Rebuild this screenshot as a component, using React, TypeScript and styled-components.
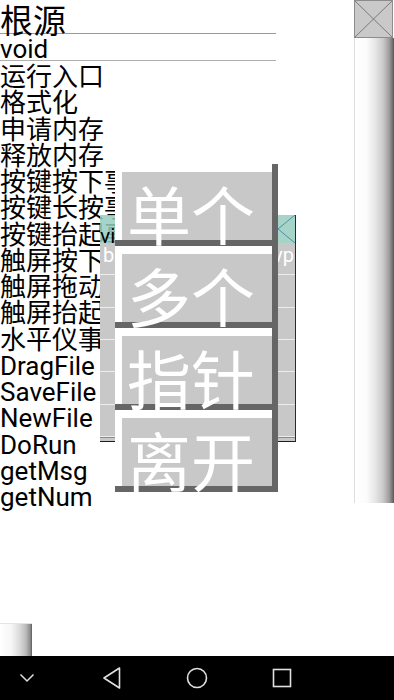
import React from "react";
import styled, { createGlobalStyle } from "styled-components";

const Global = createGlobalStyle`
  html, body { margin: 0; padding: 0; background: #fff; }
  body { font-family: Roboto, "Noto Sans CJK SC", sans-serif; }
`;

const Screen = styled.div`
  position: relative;
  width: 394px;
  height: 700px;
  overflow: hidden;
  display: flex;
  flex-direction: column;
  background: #fff;
`;

const Content = styled.div`
  flex: 1;
  display: flex;
  min-height: 0;
`;

const LeftPane = styled.div`
  flex: 1;
  display: flex;
  flex-direction: column;
  min-width: 0;
`;

const Header = styled.div`
  width: 276px;
  height: 33px;
  border-bottom: 1px solid #9a9a9a;
  font-size: 33px;
  line-height: 43px;
  color: #000;
  white-space: nowrap;
`;

const VoidRow = styled.div`
  width: 276px;
  height: 26px;
  border-bottom: 1px solid #b0b0b0;
  font-size: 26px;
  line-height: 30px;
  color: #000;
`;

const List = styled.div`
  padding-top: 3px;
  display: flex;
  flex-direction: column;
`;

const Item = styled.div`
  height: 26.25px;
  line-height: 26.25px;
  font-size: 26px;
  color: #000;
  white-space: nowrap;
`;

const Knob = styled.div`
  margin-top: auto;
  width: 32px;
  height: 33px;
  box-sizing: border-box;
  border-top: 1px solid #e4e4e4;
  background: linear-gradient(to right, #fff 0%, #f6f6f6 35%, #dcdcdc 60%, #bdbdbd 80%, #8e8e8e 94%, #5c5c5c 100%);
`;

const RightPane = styled.div`
  width: 40px;
  display: flex;
  flex-direction: column;
`;

const ThumbBox = styled.div`
  width: 39px;
  height: 38px;
  box-sizing: border-box;
  border: 1px solid #8c8c8c;
  background: #c9c9c9;
  svg { display: block; }
`;

const Track = styled.div`
  width: 40px;
  height: 465px;
  box-sizing: border-box;
  border-left: 1px solid #dedede;
  background: linear-gradient(to right, #fff 0%, #fbfbfb 30%, #e6e6e6 52%, #cacaca 72%, #9c9c9c 88%, #5a5a5a 100%);
`;

const Dialog = styled.div`
  position: absolute;
  left: 100px;
  top: 215px;
  width: 196px;
  display: flex;
  flex-direction: column;
  box-sizing: border-box;
  border-right: 1px solid #2a2a2a;
`;

const TitleBar = styled.div`
  position: relative;
  height: 28px;
  background: rgba(150, 205, 190, 0.85);
  font-size: 21px;
  line-height: 42px;
  color: #000;
  padding-left: 0;
  overflow: hidden;
  white-space: nowrap;
`;

const CloseIcon = styled.svg`
  position: absolute;
  right: 0;
  top: 0;
`;

const DRow = styled.div`
  height: 32.33px;
  box-sizing: border-box;
  background: #c8c8c8;
  border-bottom: 1px solid #ededed;
  display: flex;
  justify-content: space-between;
  padding: 0 1px 0 3px;
  font-size: 20px;
  line-height: 24px;
  color: #fff;
`;

const DBottom = styled.div`
  height: 5px;
  background: #c8c8c8;
  border-top: 1px solid #8a8a8a;
  border-bottom: 1px solid #1e1e1e;
  box-sizing: border-box;
`;

const Menu = styled.div`
  position: absolute;
  left: 115px;
  top: 164px;
  width: 163px;
  display: flex;
  flex-direction: column;
`;

const MenuShell = styled.div`
  height: 82px;
  box-sizing: border-box;
  border-right: 6px solid #666;
  border-bottom: 6px solid #666;
  display: flex;
`;

const MenuFace = styled.div`
  flex: 1;
  box-sizing: border-box;
  border-top: 8px solid #fff;
  border-left: 7px solid #fff;
  background: #c8c8c8;
  color: #fff;
  font-family: "Noto Sans CJK SC", sans-serif;
  font-size: 64px;
  line-height: 64px;
  padding: 8px 0 0 5px;
  white-space: nowrap;
`;

const NavBar = styled.div`
  height: 44px;
  background: #000;
  display: flex;
  align-items: center;
  gap: 45px;
  padding-left: 7px;
`;

const NavItem = styled.div`
  width: 40px;
  display: flex;
  justify-content: center;
  align-items: center;
  svg { display: block; }
`;

const items = [
  "运行入口",
  "格式化",
  "申请内存",
  "释放内存",
  "按键按下事件",
  "按键长按事件",
  "按键抬起事件",
  "触屏按下事件",
  "触屏拖动事件",
  "触屏抬起事件",
  "水平仪事件",
  "DragFile",
  "SaveFile",
  "NewFile",
  "DoRun",
  "getMsg",
  "getNum",
];

const menu = ["单个", "多个", "指针", "离开"];

export default function App() {
  return (
    <>
      <Global />
      <Screen>
        <Content>
          <LeftPane>
            <Header>根源</Header>
            <VoidRow>void</VoidRow>
            <List>
              {items.map((t) => (
                <Item key={t}>{t}</Item>
              ))}
            </List>
            <Knob />
          </LeftPane>
          <RightPane>
            <ThumbBox>
              <svg width="37" height="36" viewBox="0 0 37 36">
                <line x1="0" y1="0" x2="37" y2="36" stroke="#7a7a7a" strokeWidth="1" />
                <line x1="37" y1="0" x2="0" y2="36" stroke="#7a7a7a" strokeWidth="1" />
              </svg>
            </ThumbBox>
            <Track />
          </RightPane>
        </Content>
        <NavBar>
          <NavItem>
            <svg width="16" height="10" viewBox="0 0 16 10">
              <polyline points="1.5,1.5 8,8 14.5,1.5" fill="none" stroke="#e0e0e0" strokeWidth="1.5" />
            </svg>
          </NavItem>
          <NavItem>
            <svg width="20" height="24" viewBox="0 0 20 24">
              <polygon points="17.5,2 2,12 17.5,22" fill="none" stroke="#e0e0e0" strokeWidth="1.6" strokeLinejoin="round" />
            </svg>
          </NavItem>
          <NavItem>
            <svg width="24" height="24" viewBox="0 0 24 24">
              <circle cx="12" cy="12" r="9.5" fill="none" stroke="#e0e0e0" strokeWidth="1.6" />
            </svg>
          </NavItem>
          <NavItem>
            <svg width="22" height="22" viewBox="0 0 22 22">
              <rect x="2.5" y="2.5" width="17" height="17" fill="none" stroke="#e0e0e0" strokeWidth="1.6" />
            </svg>
          </NavItem>
        </NavBar>

        <Dialog>
          <TitleBar>
            vi
            <CloseIcon width="34" height="28" viewBox="0 0 34 28">
              <line x1="0" y1="0" x2="34" y2="28" stroke="#4f8fa8" strokeWidth="1" />
              <line x1="34" y1="0" x2="0" y2="28" stroke="#4f8fa8" strokeWidth="1" />
            </CloseIcon>
          </TitleBar>
          <DRow>
            <span>b</span>
            <span>vp</span>
          </DRow>
          <DRow />
          <DRow />
          <DRow />
          <DRow />
          <DRow />
          <DBottom />
        </Dialog>

        <Menu>
          {menu.map((m) => (
            <MenuShell key={m}>
              <MenuFace>{m}</MenuFace>
            </MenuShell>
          ))}
        </Menu>
      </Screen>
    </>
  );
}
